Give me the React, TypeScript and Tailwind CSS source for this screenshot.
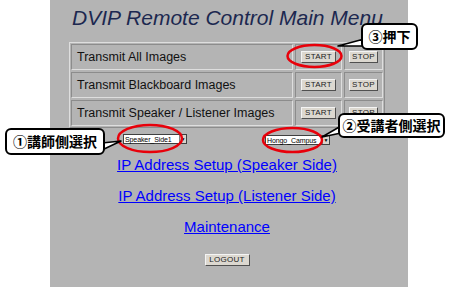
import React from 'react';

const ROWS = ['Transmit All Images', 'Transmit Blackboard Images', 'Transmit Speaker / Listener Images'];

const sans = "font-['Liberation_Sans',Arial,sans-serif]";
const jp = "font-['Noto_Sans_CJK_JP','Liberation_Sans',sans-serif]";

// Classic grey form button
const FormButton: React.FC<{ label: string; width: string }> = ({ label, width }) => (
  <button
    className={`${width} h-[12px] flex items-center justify-center bg-[#dcd8d0] border border-t-[#f4f4f4] border-l-[#f4f4f4] border-r-[#505050] border-b-[#505050] text-[8px] leading-none tracking-[0.3px] text-[#222] ${sans}`}
  >
    {label}
  </button>
);

const FakeSelect: React.FC<{ value: string; width: string }> = ({ value, width }) => (
  <div className={`${width} h-[10px] flex bg-white border border-[#404040] text-[7px] tracking-[-0.1px] text-black ${sans}`}>
    <span className="flex-1 pl-[1px] leading-[7px] pt-[0.5px] whitespace-nowrap">{value}</span>
    <span className="w-[7px] bg-[#d8d4cc] border-l border-[#808080] flex items-center justify-center text-[5px] leading-none">▼</span>
  </div>
);

export default function App() {
  return (
    <div className="relative w-[450px] h-[287px] bg-white overflow-hidden">
      {/* Main grey panel */}
      <div className="ml-[50px] w-[358px] h-[287px] bg-[#b4b4b4] flex flex-col">
        <h1 className={`pt-[6px] pl-[22px] text-[21px] leading-[24px] italic text-[#1c2850] ${sans}`}>
          DVIP Remote Control Main Menu
        </h1>

        {/* Control table */}
        <div className="mt-[12px] ml-[19px] w-[316px] border border-t-[#dedede] border-l-[#dedede] border-r-[#8c8c8c] border-b-[#8c8c8c] p-[1px] flex flex-col gap-[2px]">
          {ROWS.map((row) => (
            <div key={row} className="flex gap-[2px] h-[26px]">
              <div className={`w-[222px] border border-t-[#8c8c8c] border-l-[#8c8c8c] border-r-[#dedede] border-b-[#dedede] flex items-center pl-[5px] text-[12.5px] text-[#111] ${sans}`}>
                {row}
              </div>
              <div className="w-[47px] border border-t-[#8c8c8c] border-l-[#8c8c8c] border-r-[#dedede] border-b-[#dedede] flex items-center justify-center">
                <FormButton label="START" width="w-[35px]" />
              </div>
              <div className="w-[39px] border border-t-[#8c8c8c] border-l-[#8c8c8c] border-r-[#dedede] border-b-[#dedede] flex items-center justify-center">
                <FormButton label="STOP" width="w-[29px]" />
              </div>
            </div>
          ))}
        </div>

        {/* Site selectors */}
        <div className="mt-[6px] pl-[73px] flex items-start">
          <FakeSelect value="Speaker_Side1" width="w-[64px]" />
          <div className="ml-[78px] mt-[1px]">
            <FakeSelect value="Hongo_Campus" width="w-[65px]" />
          </div>
        </div>

        {/* Links */}
        <div className={`mt-[11px] pr-[4px] flex flex-col items-center gap-[13px] text-[15px] leading-[18px] ${sans}`}>
          <a className="text-[#0000ff] underline">IP Address Setup (Speaker Side)</a>
          <a className="text-[#0000ff] underline">IP Address Setup (Listener Side)</a>
          <a className="text-[#0000ff] underline">Maintenance</a>
        </div>

        <div className="mt-[18px] pr-[4px] flex justify-center">
          <FormButton label="LOGOUT" width="w-[45px]" />
        </div>
      </div>

      {/* Annotation marks */}
      <svg className="absolute inset-0 pointer-events-none" width="450" height="287" viewBox="0 0 450 287">
        <ellipse cx="314.5" cy="56" rx="27" ry="11" fill="none" stroke="#e8000a" strokeWidth="2.5" />
        <ellipse cx="150" cy="138.5" rx="32" ry="13.5" fill="none" stroke="#e8000a" strokeWidth="2.5" />
        <ellipse cx="292.5" cy="140" rx="29.5" ry="12" fill="none" stroke="#e8000a" strokeWidth="2.5" />
        <polygon points="364,39 338,46 364,46" fill="white" stroke="black" strokeWidth="1.5" strokeLinejoin="round" />
        <polygon points="102,143 121,141 102,150" fill="white" stroke="black" strokeWidth="1.5" strokeLinejoin="round" />
        <polygon points="341,126 322,137 341,133" fill="white" stroke="black" strokeWidth="1.5" strokeLinejoin="round" />
      </svg>

      <div className={`absolute left-[361px] top-[23px] w-[57px] h-[27px] bg-white border-2 border-black rounded-[6px] flex items-center justify-center text-[14px] font-bold text-black ${jp}`}>
        ③押下
      </div>
      <div className={`absolute left-[5px] top-[128px] w-[100px] h-[27px] bg-white border-2 border-black rounded-[6px] flex items-center justify-center text-[14px] font-bold text-black ${jp}`}>
        ①講師側選択
      </div>
      <div className={`absolute left-[338px] top-[113px] w-[107px] h-[25px] bg-white border-2 border-black rounded-[6px] flex items-center justify-center text-[14px] font-bold text-black ${jp}`}>
        ②受講者側選択
      </div>
    </div>
  );
}
